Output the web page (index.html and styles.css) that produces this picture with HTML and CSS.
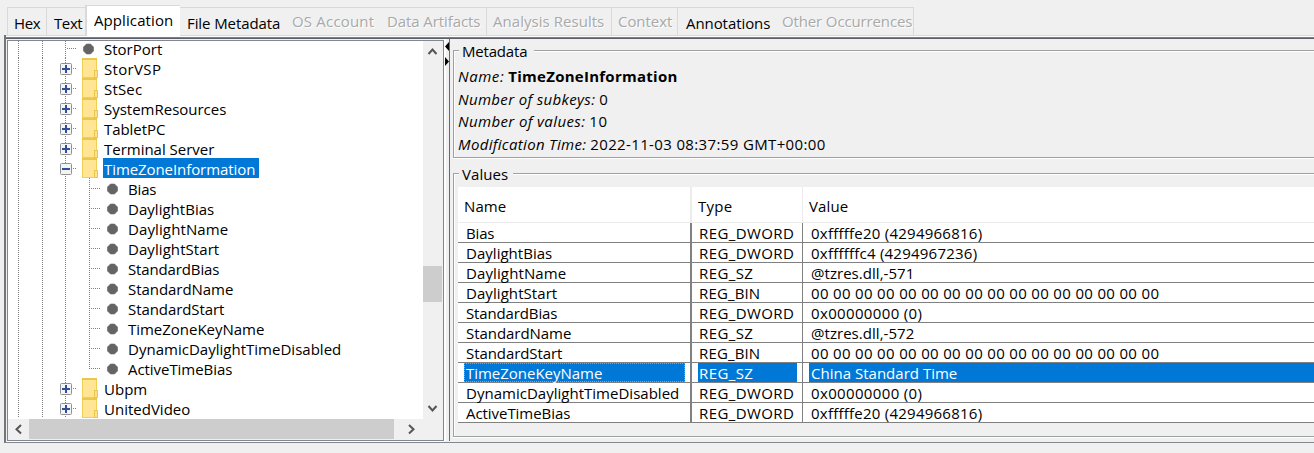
FILE: index.html
```
<!DOCTYPE html>
<html lang="en">
<head>
<meta charset="utf-8">
<title>Application</title>
<link rel="stylesheet" href="styles.css">
</head>
<body>
<nav class="tabs">
  <div class="tab first"><span data-w="26">Hex</span></div>
  <div class="tab text-tab"><span data-w="28">Text</span></div>
  <div class="tab active"><span data-w="79">Application</span></div>
  <div class="tab file-tab"><span data-w="93">File Metadata</span></div>
  <div class="tab off os-tab"><span data-w="82">OS Account</span></div>
  <div class="tab off data-tab"><span data-w="93">Data Artifacts</span></div>
  <div class="tab off analysis-tab"><span data-w="111">Analysis Results</span></div>
  <div class="tab off context-tab"><span data-w="54">Context</span></div>
  <div class="tab notes-tab"><span data-w="84">Annotations</span></div>
  <div class="tab off other-tab"><span data-w="130">Other Occurrences</span></div>
</nav>
<main class="frame">
  <section class="tree-pane">
    <div class="tree-top">
      <div class="tree" id="tree"></div>
      <div class="vbar">
        <svg width="19" height="18" viewBox="0 0 19 18"><path d="M5.5 13L9.5 8.5L13.5 13" fill="none" stroke="#555" stroke-width="2"/></svg>
        <div class="vthumb"></div>
        <svg class="down" width="19" height="18" viewBox="0 0 19 18"><path d="M5.5 6L9.5 10.5L13.5 6" fill="none" stroke="#555" stroke-width="2"/></svg>
      </div>
    </div>
    <div class="hbar">
      <svg width="21" height="20" viewBox="0 0 21 20"><path d="M13 6L8.5 10.3L13 14.5" fill="none" stroke="#555" stroke-width="2"/></svg>
      <div class="hthumb"></div>
      <svg width="29" height="20" viewBox="0 0 29 20"><path d="M15 6L19.5 10.3L15 14.5" fill="none" stroke="#555" stroke-width="2"/></svg>
    </div>
  </section>
  <div class="splitter">
    <svg width="5" height="30" viewBox="0 0 5 30"><path d="M5 3V12L1 7.5ZM1 18V27L5 22.5Z" fill="#000"/></svg>
  </div>
  <section class="details">
    <div class="group meta">
      <div class="legend"><span data-w="65">Metadata</span></div>
      <div class="lines">
        <div><i data-w="46">Name:</i><b data-w="169">TimeZoneInformation</b></div>
        <div><i data-w="137">Number of subkeys:</i><span data-w="9">0</span></div>
        <div><i data-w="127">Number of values:</i><span data-w="18">10</span></div>
        <div><i data-w="128">Modification Time:</i><span data-w="235">2022-11-03 08:37:59 GMT+00:00</span></div>
      </div>
    </div>
    <div class="group values">
      <div class="legend"><span data-w="46">Values</span></div>
      <div class="table" id="table">
        <div class="row head">
          <div class="c1"><span data-w="42">Name</span></div>
          <div class="c2"><span data-w="34">Type</span></div>
          <div class="c3"><span data-w="39">Value</span></div>
        </div>
      </div>
    </div>
  </section>
</main>
<script src="main.js"></script>
</body>
</html>
```
FILE: styles.css
```
* { box-sizing: border-box; }
body {
  margin: 0; width: 1314px; height: 453px; overflow: hidden;
  display: flex; flex-direction: column;
  background: #f0f0f0; color: #000;
  font: 15px/20px "Open Sans", "Noto Sans", sans-serif;
}
[data-w] { display: inline-block; white-space: nowrap; }
svg { display: block; flex: none; }

/* tabs */
.tabs { display: flex; align-items: flex-end; height: 35px; padding-left: 7px; flex: none; }
.tab { height: 28px; border-top: 1px solid #d9d9d9; padding: 5px 0 0 7px; flex: none; }
.tab.first { width: 39px; border-left: 1px solid #d9d9d9; padding-left: 6px; }
.tab.text-tab { width: 39px; border-left: 1px solid #d9d9d9; }
.tab.active {
  width: 95px; height: 31px; margin-bottom: -1px; padding: 4px 0 0 7px; background: #fff;
  border: 2px solid #d9d9d9; border-width: 1px 0 0 2px; position: relative; z-index: 1;
}
.tab.off { color: #a9a9a9; text-shadow: 1px 1px 0 #fff; padding-top: 3px; }
.file-tab { width: 105px; }
.os-tab { width: 96px; }
.tab.data-tab { width: 105px; padding-left: 6px; }
.analysis-tab { width: 125px; border-left: 1px solid #d9d9d9; padding-left: 6px; }
.context-tab { width: 66px; border-left: 1px solid #d9d9d9; padding-left: 6px; }
.notes-tab { width: 97px; border-left: 1px solid #d9d9d9; padding-left: 8px; }
.tab.other-tab { width: 140px; border-right: 1px solid #d9d9d9; padding-left: 8px; }

/* frame */
.frame {
  margin-left: 4px; height: 408px; flex: none; display: flex;
  border-left: 2px solid #74767c; border-bottom: 1px solid #828790;
  background: linear-gradient(#d9d9d9 1px, #fff 1px 2px, #7d7d83 2px 3px, #5f5f68 3px 4px, transparent 4px);
  padding-top: 4px;
}
.tree-pane {
  width: 437px; height: 401px; margin: 1px 0 0 1px; flex: none;
  border: 1px solid #828790; background: #fff; box-shadow: 0 1px #fff;
}
.tree-top { display: flex; height: 378px; }
.tree { width: 415px; overflow: hidden; }
.trow {
  height: 20px; display: flex; align-items: flex-end;
  background:
    repeating-linear-gradient(#808080 0 1px, transparent 1px 2px) 10px 0 / 1px 20px no-repeat,
    repeating-linear-gradient(#808080 0 1px, transparent 1px 2px) 34px 0 / 1px 20px no-repeat,
    repeating-linear-gradient(#808080 0 1px, transparent 1px 2px) 57px 0 / 1px 20px no-repeat;
}
.trow svg { margin-left: 50px; }
.trow .label { padding-left: 1px; height: 20px; line-height: 22px; }
.trow:first-child { height: 17px; }
.trow:first-child .label { height: 17px; line-height: 17px; }
.trow.selected .label { background: #0078d7; color: #fff; width: 156px; }
.vbar { width: 20px; background: #f0f0f0; display: flex; flex-direction: column; }
.vthumb { width: 19px; height: 36px; margin-top: 207px; background: #cdcdcd; }
.down { margin-top: 98px; }
.hbar { height: 21px; display: flex; background: #f0f0f0; }
.hthumb { width: 365px; height: 20px; background: #cdcdcd; flex: none; }
.splitter { width: 5px; height: 402px; background: linear-gradient(90deg, #fff 2px, #f0f0f0 2px); flex: none; }
.details { flex: 1; height: 402px; border-left: 1px solid #696969; padding-left: 3px; min-width: 0; }

/* titled groups */
.group { border: 1px solid #a0a0a0; border-right: 0; box-shadow: inset 1px 1px #fff, 0 1px #fff; padding-left: 4px; }
.meta { margin-top: 11px; height: 108px; }
.values { margin-top: 15px; height: 264px; }
.legend { width: 75px; height: 20px; margin: -10px 0 0 1px; padding-left: 3px; background: #f0f0f0; line-height: 20px; }
.values .legend { width: 54px; }
.lines { display: grid; grid-template-rows: 23px 22px 23px 23px; padding-top: 4px; line-height: 23px; }
.lines > div { display: flex; gap: 4px; }

/* table */
.table { margin-top: 3px; background: #fff; }
.row { display: flex; height: 20px; border-bottom: 1px solid #808080; line-height: 21px; }
.row.head { height: 36px; border-bottom-color: #ececec; line-height: 39px; }
.c1, .c2, .c3 { padding: 0 6px; flex: none; }
.c1 { width: 234px; border-right: 2px solid #808080; }
.c2 { width: 111px; border-right: 1px solid #808080; }
.c3 { flex: 1; padding-right: 0; }
.head .c1, .head .c2 { border-right-color: #ececec; }
.cell { height: 19px; padding-left: 2px; }
.c2 .cell { padding-left: 1px; width: 99px; }
.row.selected .cell { background: #0078d7; color: #fff; }
.row.selected .c1 .cell { outline: 1px dotted #ff8728; outline-offset: -1px; width: 221px; }
```
FILE: main.js
```
const tree = [
  ["leaf", "StorPort", 58], ["folder", "StorVSP", 57], ["folder", "StSec", 38],
  ["folder", "SystemResources", 122], ["folder", "TabletPC", 61],
  ["folder", "Terminal Server", 110], ["open", "TimeZoneInformation", 151],
  ["child", "Bias", 28], ["child", "DaylightBias", 86], ["child", "DaylightName", 100],
  ["child", "DaylightStart", 91], ["child", "StandardBias", 91], ["child", "StandardName", 105],
  ["child", "StandardStart", 96], ["child", "TimeZoneKeyName", 136],
  ["child", "DynamicDaylightTimeDisabled", 213], ["last", "ActiveTimeBias", 104],
  ["folder", "Ubpm", 43], ["folder", "UnitedVideo", 86]
];
const dash = d => `<path d="${d}" stroke="#808080" stroke-dasharray="1 1" fill="none"/>`;
const dot = x => `<path d="M${x - 2} 6h4l3 3v4l-3 3h-4l-3 -3v-4z" fill="#646464" stroke="#646464" stroke-width=".6"/>`;
function icon(kind) {
  if (kind === "leaf") return dash("M9 10.5H18") + dot(30.5);
  if (kind === "child" || kind === "last")
    return dash(kind === "last" ? "M31.5 0V11" : "M31.5 0V20") + dash("M33 10.5H43") + dot(54.5);
  return dash("M15 10.5H18") +
    `<rect x="2.5" y="5.5" width="11" height="11" rx="1" fill="#f4f4f4" stroke="#919191"/>
     <path d="M4 11H12${kind === "folder" ? "M8 7V15" : ""}" stroke="#2f4e9c" stroke-width="2"/>
     <rect x="24.5" y=".5" width="14" height="19" fill="#ffe594" stroke="#efcf54"/>
     <path d="M24 1H39" stroke="#e9c64c" stroke-width="2"/>
     <rect x="36.5" y="12.5" width="3" height="7" fill="#ffe088" stroke="#e9c64c"/>`;
}
document.getElementById("tree").innerHTML = tree.map(([kind, text, w]) => {
  const width = kind === "child" || kind === "last" ? 69 : 45;
  return `<div class="trow ${kind === "open" ? "selected" : ""}">
    <svg width="${width}" height="20" viewBox="0 0 ${width} 20">${icon(kind)}</svg>
    <div class="label"><span data-w="${w}">${text}</span></div></div>`;
}).join("");

const zeros = Array(16).fill("00").join(" ");
const values = [
  ["Bias", 28, "REG_DWORD", 95, "0xfffffe20 (4294966816)", 171],
  ["DaylightBias", 86, "REG_DWORD", 95, "0xffffffc4 (4294967236)", 166],
  ["DaylightName", 100, "REG_SZ", 54, "@tzres.dll,-571", 103],
  ["DaylightStart", 91, "REG_BIN", 61, zeros, 348],
  ["StandardBias", 91, "REG_DWORD", 95, "0x00000000 (0)", 111],
  ["StandardName", 105, "REG_SZ", 54, "@tzres.dll,-572", 103],
  ["StandardStart", 96, "REG_BIN", 61, zeros, 348],
  ["TimeZoneKeyName", 136, "REG_SZ", 54, "China Standard Time", 146],
  ["DynamicDaylightTimeDisabled", 213, "REG_DWORD", 95, "0x00000000 (0)", 111],
  ["ActiveTimeBias", 104, "REG_DWORD", 95, "0xfffffe20 (4294966816)", 171]
];
const cell = (n, text, w) => `<div class="c${n}"><div class="cell"><span data-w="${w}">${text}</span></div></div>`;
document.getElementById("table").insertAdjacentHTML("beforeend", values.map(v =>
  `<div class="row ${v[0] === "TimeZoneKeyName" ? "selected" : ""}">` +
  cell(1, v[0], v[1]) + cell(2, v[2], v[3]) + cell(3, v[4], v[5]) + "</div>").join(""));

// Track each label to its assigned width.
document.querySelectorAll("[data-w]").forEach(el => {
  const natural = el.getBoundingClientRect().width;
  el.style.letterSpacing = (Number(el.dataset.w) + 0.3 - natural) / el.textContent.length + "px";
});
```
